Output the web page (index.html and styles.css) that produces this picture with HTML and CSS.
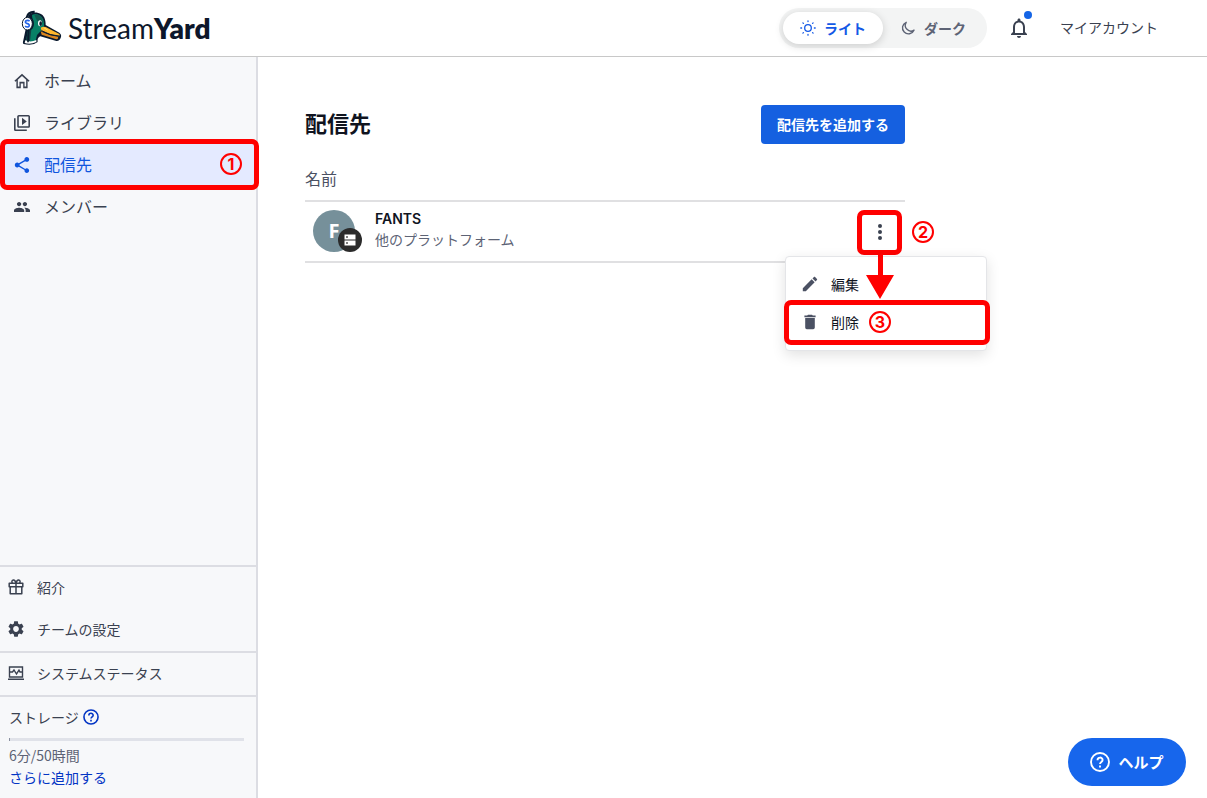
FILE: index.html
```html
<!DOCTYPE html>
<html lang="ja">
<head>
<meta charset="utf-8">
<meta name="viewport" content="width=device-width, initial-scale=1">
<title>配信先 - StreamYard</title>
<link rel="stylesheet" href="styles.css">
</head>
<body>
<header class="topbar">
  <a class="logo" href="#">
    <svg class="logo-mark" viewBox="60 28 129 108" aria-hidden="true">
      <path d="M84 50C87 35 108 31 124 41C134 47 137 60 137 73L178 96Q185 101 183 109Q179 122 169 121L121 107Q111 111 113 124Q99 136 71 130Q67 128 70 119L77 86Z" fill="#0a1a2e"/>
      <path d="M96 43Q109 36 121 45Q133 53 132 76L123 90L111 103L107 120Q91 127 78 121L84 89Q98 83 98 63Z" fill="#078066"/>
      <path d="M103 42Q119 40 126 53L129 66L112 62Q106 51 103 42Z" fill="#12594f"/>
      <path d="M84 92L94 87L90 121L77 120Z" fill="#123f42"/>
      <path d="M76 119Q92 126 109 118L109 124Q91 132 74 127Z" fill="#fff"/>
      <path d="M122 81Q129 76 137 79L178 100Q181 104 177 107Q154 103 125 91Z" fill="#ffb72e"/>
      <path d="M122 92Q150 107 175 108Q174 117 169 116L125 102Z" fill="#db861f"/>
      <path d="M125 90Q151 106 178 106" fill="none" stroke="#0a1a2e" stroke-width="3"/>
      <path d="M131 81L143 88" stroke="#ffe16c" stroke-width="3"/>
      <ellipse cx="120" cy="68" rx="6" ry="9" fill="#fff"/>
      <ellipse cx="122" cy="69" rx="4" ry="7" fill="#0a1a2e"/>
      <path d="M80 51Q84 33 104 34" fill="none" stroke="#0a1a2e" stroke-width="7"/>
      <path d="M86 80L84 125" stroke="#0a1a2e" stroke-width="5"/>
      <ellipse cx="87" cy="69" rx="15" ry="21" fill="#0a1a2e"/>
      <ellipse cx="82" cy="69" rx="15" ry="19" fill="#fff" stroke="#0a1a2e" stroke-width="3"/>
      <path d="M89 61Q83 57 77 61Q74 67 82 69Q90 71 87 77Q82 81 75 77" fill="none" stroke="#2464e8" stroke-width="5"/>
    </svg>
    <span class="wordmark">Stream<strong>Yard</strong></span>
  </a>
  <div class="topbar-tools">
    <div class="theme-switch" role="group" aria-label="テーマ">
      <button class="theme-option theme-option-active" type="button" aria-pressed="true">
        <svg class="icon" viewBox="0 0 16 16" fill="none" stroke="currentColor" stroke-width="1.3" stroke-linecap="round" aria-hidden="true"><circle cx="8" cy="8" r="3.3"/><path d="M8 .8v.8M8 14.400v.8M.8 8h.8M14.400 8h.8M2.900 2.900l.5.5M12.600 12.600l.5.5M2.900 13.100l.5-.5M12.600 3.400l.5-.5"/></svg>
        ライト
      </button>
      <button class="theme-option" type="button" aria-pressed="false">
        <svg class="icon" viewBox="0 0 16 16" fill="none" stroke="currentColor" stroke-width="1.4" stroke-linejoin="round" aria-hidden="true"><path d="M6.200 2.300A6 6 0 1 0 14 10.200A5.700 5.700 0 0 1 6.200 2.300Z"/></svg>
        ダーク
      </button>
    </div>
    <button class="bell" type="button" aria-label="通知">
      <svg class="bell-icon" viewBox="4 2 16 20" fill="currentColor" aria-hidden="true"><path d="M12 22c1.100 0 2-.9 2-2h-4c0 1.100.9 2 2 2zm6-6v-5c0-3.070-1.630-5.640-4.500-6.320V4c0-.83-.67-1.500-1.500-1.500s-1.500.67-1.500 1.500v.68C7.640 5.360 6 7.920 6 11v5l-2 2v1h16v-1l-2-2zm-2 1H8v-6c0-2.480 1.510-4.500 4-4.500s4 2.020 4 4.500v6z"/></svg>
      <span class="bell-dot"></span>
    </button>
    <a class="account" href="#">マイアカウント</a>
  </div>
</header>

<div class="shell">
  <aside class="sidebar">
    <nav class="nav-main">
      <a class="nav-item" href="#">
        <svg class="icon" viewBox="2 2 20 20" fill="currentColor" aria-hidden="true"><path d="M12 3 2.500 11.600 3.800 13 5 12v9h5.500v-6h3v6H19v-9l1.200 1 1.300-1.400zm0 2.600 5.200 4.700V19h-2v-6H8.800v6h-2v-8.700z"/></svg>
        ホーム
      </a>
      <a class="nav-item" href="#">
        <svg class="icon" viewBox="2 2 20 20" fill="currentColor" aria-hidden="true"><path d="M4 6H2v14c0 1.100.9 2 2 2h14v-2H4V6zm16-4H8c-1.100 0-2 .9-2 2v12c0 1.100.9 2 2 2h12c1.100 0 2-.9 2-2V4c0-1.100-.9-2-2-2zm0 14H8V4h12v12zM12 5.500v9l6-4.500z"/></svg>
        ライブラリ
      </a>
      <a class="nav-item nav-item-active" href="#" aria-current="page">
        <svg class="icon" viewBox="2 2 20 20" fill="currentColor" aria-hidden="true"><path d="M18 16.080c-.76 0-1.440.3-1.960.77L8.910 12.700c.05-.23.090-.46.090-.7s-.04-.47-.09-.7l7.050-4.110c.54.5 1.250.81 2.040.81 1.660 0 3-1.340 3-3s-1.340-3-3-3-3 1.340-3 3c0 .24.040.47.090.7L8.040 9.810C7.500 9.310 6.790 9 6 9c-1.660 0-3 1.340-3 3s1.340 3 3 3c.79 0 1.500-.31 2.040-.81l7.120 4.160c-.05.21-.08.43-.08.65 0 1.610 1.310 2.920 2.920 2.920s2.920-1.310 2.920-2.920-1.310-2.920-2.920-2.920z"/></svg>
        配信先
        <span class="step step-end">1</span>
        <span class="frame frame-nav"></span>
      </a>
      <a class="nav-item" href="#">
        <svg class="icon" viewBox="1 1 22 22" fill="currentColor" aria-hidden="true"><path d="M16 11c1.660 0 2.990-1.340 2.990-3S17.660 5 16 5s-3 1.340-3 3 1.340 3 3 3zm-8 0c1.660 0 2.990-1.340 2.990-3S9.660 5 8 5 5 6.340 5 8s1.340 3 3 3zm0 2c-2.330 0-7 1.170-7 3.500V19h14v-2.500c0-2.330-4.670-3.500-7-3.500zm8 0c-.29 0-.62.020-.97.050 1.160.84 1.970 1.970 1.970 3.450V19h6v-2.500c0-2.330-4.670-3.500-7-3.500z"/></svg>
        メンバー
      </a>
    </nav>
    <div class="nav-foot">
      <nav class="foot-group">
        <a class="foot-item" href="#">
          <svg class="icon" viewBox="0 0 16 16" fill="none" stroke="currentColor" stroke-width="1.500" stroke-linejoin="round" aria-hidden="true"><path d="M1.200 4.300h13.600v3.400H1.200zM2.200 7.700h11.600v7H2.200zM8 4.300v10.400M8 4.300C7.500 1.500 6.300.8 5.200.9C3.500 1.100 3.500 4 5 4.300M8 4.300C8.500 1.500 9.700.8 10.800.9C12.500 1.100 12.500 4 11 4.300"/></svg>
          紹介
        </a>
        <a class="foot-item" href="#">
          <svg class="icon" viewBox="2 2 20 20" fill="currentColor" aria-hidden="true"><path d="M19.140 12.940c.040-.3.060-.61.060-.94 0-.32-.02-.64-.07-.94l2.030-1.580c.18-.14.230-.41.120-.61l-1.920-3.320c-.12-.22-.37-.29-.59-.22l-2.390.96c-.5-.38-1.030-.7-1.620-.94l-.36-2.540c-.04-.24-.24-.41-.48-.41h-3.840c-.24 0-.43.170-.47.410l-.36 2.540c-.59.240-1.130.570-1.620.940l-2.390-.96c-.22-.08-.47 0-.59.220L2.740 8.870c-.12.210-.08.470.120.610l2.030 1.580c-.05.300-.09.630-.09.940s.02.640.070.940l-2.030 1.580c-.18.140-.23.410-.12.610l1.920 3.320c.12.220.37.290.59.220l2.390-.96c.5.380 1.030.7 1.620.940l.36 2.540c.05.240.24.410.48.410h3.840c.24 0 .44-.17.470-.41l.36-2.540c.59-.24 1.130-.56 1.620-.94l2.390.96c.22.080.47 0 .59-.22l1.920-3.320c.12-.22.070-.47-.12-.61l-2.010-1.580zM12 15.600c-1.980 0-3.600-1.620-3.600-3.600s1.620-3.600 3.600-3.600 3.600 1.620 3.600 3.600-1.620 3.600-3.600 3.600z"/></svg>
          チームの設定
        </a>
      </nav>
      <nav class="foot-group">
        <a class="foot-item" href="#">
          <svg class="icon" viewBox="0 0 16 16" fill="none" stroke="currentColor" stroke-width="1.400" aria-hidden="true"><path d="M1.500 2h13v10h-13zM0 14.300h16M2 7h2.500L6 5l2.500 4L11 5.200 12 7h2"/></svg>
          システムステータス
        </a>
      </nav>
      <section class="storage">
        <div class="storage-title">
          <label for="storage-used">ストレージ</label>
          <button class="storage-help" type="button" aria-label="ストレージについて">
            <svg class="icon" viewBox="0 0 20 20" fill="none" stroke="currentColor" stroke-width="2" aria-hidden="true"><circle cx="10" cy="10" r="8.800"/><path d="M7.300 8C7.300 4.500 12.700 4.500 12.700 7.800C12.700 9.800 10 9.800 10 12M10 13.500v2"/></svg>
          </button>
        </div>
        <progress class="storage-bar" id="storage-used" value="6" max="3000"></progress>
        <div class="storage-text">6分/50時間</div>
        <a class="storage-link" href="#">さらに追加する</a>
      </section>
    </div>
  </aside>

  <main class="content">
    <div class="page">
      <div class="page-head">
        <h1 class="page-title">配信先</h1>
        <button class="primary" type="button">配信先を追加する</button>
      </div>
      <table class="list">
        <thead>
          <tr><th class="list-head" colspan="2" scope="col">名前</th></tr>
        </thead>
        <tbody>
          <tr>
            <td class="list-cell">
              <div class="destination">
                <div class="avatar">F
                  <span class="avatar-badge"><svg class="badge-icon" viewBox="0 0 12 12" aria-hidden="true"><path d="M.5.500h11v5H.5zM.5 6.500h11v5H.5z" fill="#fff"/><path d="M2.200 2.200h1.600v1.600H2.200zM2.200 8.200h1.600v1.600H2.200z" fill="#2b2b2b"/></svg></span>
                </div>
                <div class="destination-text">
                  <div class="destination-name">FANTS</div>
                  <div class="destination-type">他のプラットフォーム</div>
                </div>
              </div>
            </td>
            <td class="list-cell list-cell-actions">
              <div class="actions">
                <button class="more" type="button" aria-label="その他" aria-expanded="true">
                  <svg class="more-icon" viewBox="0 0 4 16" fill="currentColor" aria-hidden="true"><circle cx="2" cy="2" r="2"/><circle cx="2" cy="8" r="2"/><circle cx="2" cy="14" r="2"/></svg>
                </button>
                <span class="frame frame-more"></span>
                <span class="step step-more">2</span>
                <div class="menu" role="menu">
                  <button class="menu-item" type="button" role="menuitem">
                    <svg class="icon" viewBox="2 2 20 20" fill="currentColor" aria-hidden="true"><path d="M3 17.250V21h3.750L17.810 9.940l-3.750-3.750L3 17.250zM20.710 7.040c.39-.39.39-1.020 0-1.410l-2.340-2.340c-.39-.39-1.020-.39-1.410 0l-1.830 1.830 3.750 3.750 1.830-1.830z"/></svg>
                    編集
                  </button>
                  <button class="menu-item" type="button" role="menuitem">
                    <svg class="icon" viewBox="2 2 20 20" fill="currentColor" aria-hidden="true"><path d="M6 19c0 1.100.9 2 2 2h8c1.100 0 2-.9 2-2V7H6v12zM19 4h-3.500l-1-1h-5l-1 1H5v2h14V4z"/></svg>
                    削除
                    <span class="step">3</span>
                    <span class="frame frame-delete"></span>
                  </button>
                </div>
                <svg class="arrow" viewBox="0 0 28 45" aria-hidden="true"><path d="M12 0h5v21h11L14 45 0 21h12z" fill="#f00"/></svg>
              </div>
            </td>
          </tr>
        </tbody>
      </table>
    </div>
  </main>
</div>

<button class="help" type="button">
  <svg class="help-icon" viewBox="0 0 20 20" fill="none" stroke="currentColor" stroke-width="1.900" aria-hidden="true"><circle cx="10" cy="10" r="9"/><path d="M7.500 8.200C7.500 4.700 12.600 4.800 12.600 7.900C12.600 9.900 10 9.900 10 12M10 13.500v2"/></svg>
  ヘルプ
</button>
</body>
</html>
```
FILE: styles.css
```css
*, *::before, *::after { box-sizing: border-box; }

body {
  margin: 0;
  min-height: 100vh;
  display: flex;
  flex-direction: column;
  background: #fff;
  color: #3a4150;
  font-family: "Noto Sans CJK JP", sans-serif;
  font-size: 14px;
  line-height: 22px;
}

button {
  padding: 0;
  border: 0;
  background: none;
  color: inherit;
  font: inherit;
  cursor: pointer;
}

a { color: inherit; text-decoration: none; }
svg { display: block; flex: none; }
.icon { width: 16px; height: 16px; }

/* Top bar */
.topbar {
  display: flex;
  align-items: center;
  justify-content: space-between;
  height: 57px;
  padding: 0 49px 0 20px;
  border-bottom: 1px solid #c8c8c8;
}

.logo { display: flex; align-items: center; gap: 5px; color: #0d172b; }
.logo-mark { width: 43px; height: 36px; }

.wordmark {
  font-family: Lato, "Open Sans", sans-serif;
  font-size: 28px;
  font-weight: 400;
  line-height: 36px;
}

.wordmark strong { font-weight: 800; }
.topbar-tools { display: flex; align-items: center; }

.theme-switch {
  display: flex;
  height: 40px;
  padding: 4px;
  border-radius: 20px;
  background: #f3f4f4;
}

.theme-option {
  display: flex;
  align-items: center;
  justify-content: center;
  gap: 8px;
  width: 100px;
  padding-bottom: 1px;
  border-radius: 16px;
  color: #5d6375;
  font-weight: 700;
}

.theme-option-active {
  background: #fff;
  color: #1459e6;
  box-shadow: 0 2px 8px rgba(0, 0, 0, 0.16);
}

.bell { position: relative; margin-left: 24px; }
.bell-icon { width: 16px; height: 20px; }

.bell-dot {
  position: absolute;
  top: -7px;
  right: -5px;
  width: 8px;
  height: 8px;
  border-radius: 50%;
  background: #1565e6;
}

.account { margin-left: 33px; padding-bottom: 2px; }

/* Side bar */
.shell { display: flex; flex: 1; }

.sidebar {
  display: flex;
  flex-direction: column;
  justify-content: space-between;
  width: 258px;
  flex: none;
  border-right: 2px solid #dcdde3;
  background: #f7f8fa;
}

.nav-main { padding-top: 2px; }

.nav-item {
  position: relative;
  display: flex;
  align-items: center;
  gap: 14px;
  height: 42px;
  padding: 0 14px;
  font-size: 16px;
}

.nav-item .icon { margin-top: 2px; }
.nav-item-active { background: #e4eaff; color: #0f55de; }
.foot-group { border-top: 2px solid #dcdde3; }

.foot-item {
  display: flex;
  align-items: center;
  gap: 13px;
  height: 42px;
  padding: 0 8px 2px;
}

.storage { padding: 8px 12px 9px 9px; border-top: 2px solid #dcdde3; }
.storage-title { display: flex; align-items: center; gap: 4px; height: 24px; }
.storage-help, .storage-link { color: #0335c4; }

.storage-bar {
  display: block;
  appearance: none;
  width: 100%;
  height: 3px;
  margin: 9px 0 3px;
  border: 0;
  background: #e0e2e9;
}

.storage-bar::-webkit-progress-bar { background: #e0e2e9; }
.storage-bar::-webkit-progress-value { background: #8a90a0; }
.storage-text { color: #5d6375; }
.storage-link { display: block; padding-bottom: 1px; }

/* Destinations */
.content { flex: 1; padding: 48px 47px; }
.page { max-width: 600px; }
.page-head { display: flex; align-items: flex-start; justify-content: space-between; }

.page-title {
  margin: 0;
  color: #10141f;
  font-size: 22px;
  font-weight: 700;
  line-height: 34px;
}

.primary {
  height: 39px;
  padding: 0 16px 2px;
  border-radius: 4px;
  background: #1560e0;
  color: #fff;
  font-weight: 700;
}

.list { width: 100%; border-collapse: separate; border-spacing: 0; }

.list-head {
  padding: 22px 0 10px;
  border-bottom: 2px solid #e0e0e2;
  color: #4b5163;
  font-size: 16px;
  font-weight: 400;
  line-height: 24px;
  text-align: left;
}

.list-cell {
  padding: 8px 0 6px;
  border-bottom: 2px solid #e0e0e2;
  vertical-align: top;
}

.list-cell-actions { padding-right: 3px; }
.destination { display: flex; align-items: flex-start; gap: 20px; padding-left: 8px; }

.avatar {
  position: relative;
  width: 42px;
  height: 42px;
  border-radius: 50%;
  background: #76909a;
  color: #fff;
  font-family: "Open Sans", sans-serif;
  font-size: 20px;
  font-weight: 700;
  line-height: 42px;
  text-align: center;
}

.avatar-badge {
  position: absolute;
  right: -7px;
  bottom: 0;
  display: grid;
  place-items: center;
  width: 24px;
  height: 24px;
  border-radius: 50%;
  background: #2b2b2b;
}

.badge-icon { width: 12px; height: 12px; }

.destination-name {
  color: #10141f;
  font-family: Inter, sans-serif;
  font-weight: 600;
  line-height: 18px;
}

.destination-type { color: #5d6375; }

.actions { position: relative; width: 45px; margin-left: auto; }

.more {
  display: grid;
  place-items: center;
  width: 45px;
  height: 45px;
  padding-bottom: 2px;
}

.more-icon { width: 4px; height: 16px; }

.menu {
  position: absolute;
  top: 46px;
  right: -85px;
  width: 202px;
  padding: 8px 0 9px;
  border: 1px solid #e4e5e8;
  border-radius: 4px;
  background: #fff;
  box-shadow: 0 4px 14px rgba(0, 0, 0, 0.12);
}

.menu-item {
  position: relative;
  display: flex;
  align-items: center;
  width: 100%;
  height: 38px;
  padding: 0 16px;
  color: #10141f;
}

.menu-item .icon { margin-right: 13px; color: #4b5163; }
.menu-item .step { margin-left: 10px; }

/* Step markers */
.step {
  width: 22px;
  height: 22px;
  border: 2px solid #f00;
  border-radius: 50%;
  color: #f00;
  font-family: Inter, sans-serif;
  font-size: 16px;
  font-weight: 700;
  line-height: 18px;
  text-align: center;
}

.step-end { margin-left: auto; }
.step-more { position: absolute; top: 11px; left: 55px; }

.frame {
  position: absolute;
  border: 5px solid #f00;
  border-radius: 7px;
  pointer-events: none;
}

.frame-nav { inset: -4px -3px -5px 0; z-index: 1; }
.frame-more { inset: 0; }
.frame-delete { inset: -3px -4px -4px -2px; }

.arrow {
  position: absolute;
  top: 44px;
  left: 9px;
  width: 28px;
  height: 45px;
}

/* Help */
.help {
  position: fixed;
  right: 21px;
  bottom: 12px;
  display: flex;
  align-items: center;
  justify-content: center;
  gap: 8px;
  width: 118px;
  height: 48px;
  border-radius: 24px;
  background: #1766ec;
  color: #fff;
  font-size: 15px;
  font-weight: 700;
}

.help-icon { width: 20px; height: 20px; }
```
